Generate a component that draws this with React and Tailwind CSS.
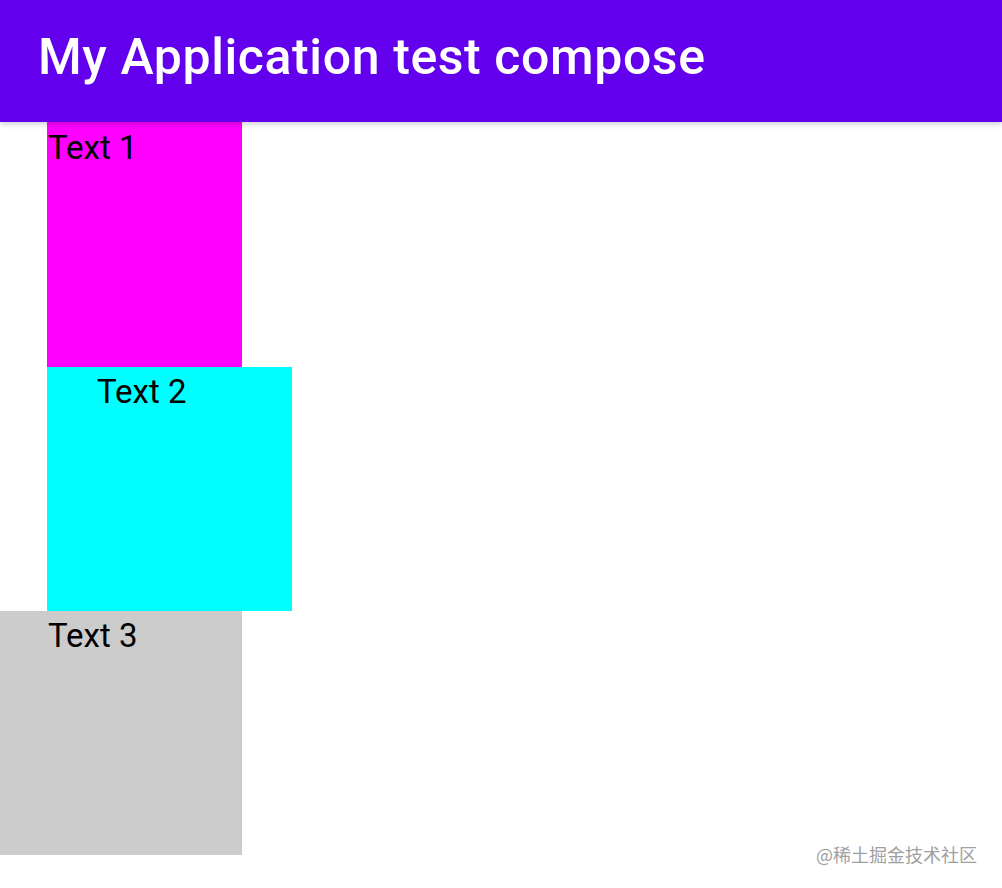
function Box({ className, textClass, label }) {
  return (
    <div className={className}>
      <div className={`text-[33px] leading-[38px] text-black ${textClass}`}>{label}</div>
    </div>
  );
}

export default function App() {
  return (
    <div className="relative h-[888px] w-[1002px] overflow-hidden bg-white font-[Roboto,'Noto_Sans',sans-serif]">
      <header className="relative z-10 flex h-[122px] items-center bg-[#6200ee] pl-[38px] shadow-[0_2px_6px_rgba(0,0,0,0.2)]">
        <h1 className="pb-[8px] text-[50px] font-medium tracking-[0.6px] text-white">My Application test compose</h1>
      </header>
      <div className="flex flex-col items-start">
        <Box className="ml-[47px] h-[245px] w-[195px] bg-[#ff00ff]" textClass="pl-[1px] pt-[7px]" label="Text 1" />
        <Box className="ml-[47px] h-[244px] w-[245px] bg-[#00ffff]" textClass="pl-[50px] pt-[6px]" label="Text 2" />
        <Box className="h-[244px] w-[242px] bg-[#cccccc]" textClass="pl-[48px] pt-[6px]" label="Text 3" />
      </div>
      <div className="absolute bottom-[25px] right-[25px] text-[18px] leading-none text-[#a0a0a0] font-['Noto_Sans_CJK_SC',sans-serif]">
        @稀土掘金技术社区
      </div>
    </div>
  );
}
